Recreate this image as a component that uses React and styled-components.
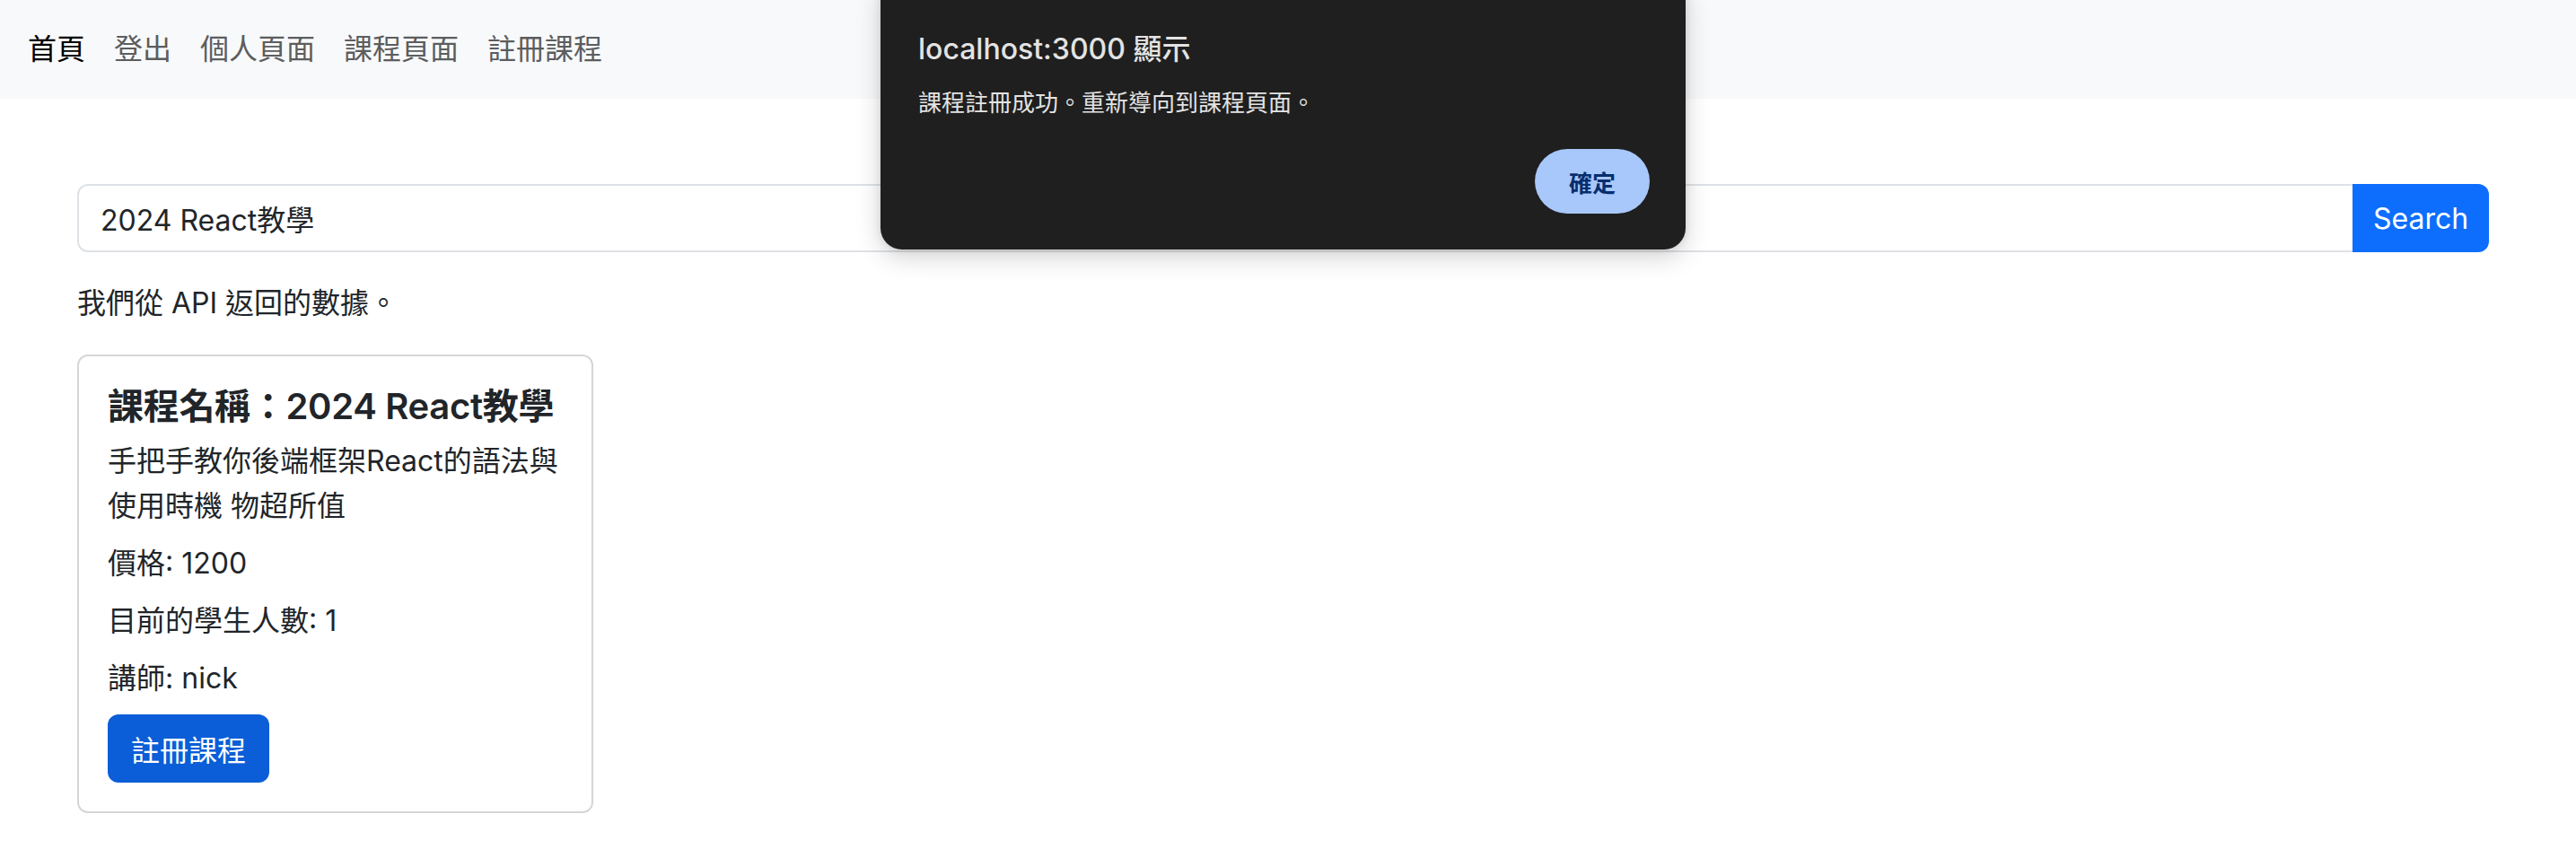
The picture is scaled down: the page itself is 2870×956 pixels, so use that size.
import React from "react";
import styled, { createGlobalStyle } from "styled-components";

const GlobalStyle = createGlobalStyle`
  html, body {
    margin: 0;
    padding: 0;
    background: #ffffff;
  }
  body {
    font-family: Inter, "Noto Sans CJK TC", "Noto Sans", sans-serif;
    color: #212529;
    overflow: hidden;
  }
  * { box-sizing: border-box; }
`;

const Page = styled.div`
  position: relative;
  width: 2870px;
  min-height: 956px;
`;

const Navbar = styled.nav`
  height: 110px;
  background: #f8f9fa;
  display: flex;
  align-items: center;
  padding-left: 15px;
`;

const NavLink = styled.a`
  font-size: 32px;
  line-height: 48px;
  padding: 0 16px;
  color: ${(p) => (p.$active ? "#000000" : "#5c5d5e")};
  text-decoration: none;
  cursor: pointer;
`;

const Main = styled.main`
  padding: 95px 97px 0 86px;
`;

const SearchGroup = styled.div`
  display: flex;
  height: 76px;
  margin-bottom: 32px;
`;

const SearchInput = styled.input`
  flex: 1;
  min-width: 0;
  height: 100%;
  border: 2px solid #dee2e6;
  border-right: none;
  border-radius: 12px 0 0 12px;
  padding: 0 24px;
  font-family: inherit;
  font-size: 32px;
  color: #212529;
  background: #ffffff;
  outline: none;
`;

const SearchButton = styled.button`
  width: 152px;
  height: 100%;
  border: none;
  border-radius: 0 12px 12px 0;
  background: #0d6efd;
  color: #ffffff;
  font-family: inherit;
  font-size: 32px;
  cursor: pointer;
`;

const Lead = styled.p`
  margin: 0 0 32px;
  font-size: 32px;
  line-height: 50px;
`;

const Card = styled.div`
  width: 575px;
  border: 2px solid #d6d6d6;
  border-radius: 12px;
  padding: 32px;
`;

const CardTitle = styled.h5`
  margin: 0 0 12px;
  font-size: 40px;
  line-height: 48px;
  font-weight: 600;
  letter-spacing: -0.3px;
  color: #212529;
`;

const CardText = styled.p`
  margin: 0 0 14px;
  font-size: 32px;
  line-height: 50px;
`;

const PrimaryButton = styled.button`
  display: inline-flex;
  align-items: center;
  justify-content: center;
  height: 76px;
  margin-top: 1px;
  padding: 0 26px;
  border: none;
  border-radius: 12px;
  background: ${(p) => p.$bg || "#0d6efd"};
  color: #ffffff;
  font-family: inherit;
  font-size: 32px;
  cursor: pointer;
`;

const Dialog = styled.div`
  position: absolute;
  top: -24px;
  left: 981px;
  width: 897px;
  height: 302px;
  background: #1f1f1f;
  border-radius: 24px;
  padding: 59px 40px 0 42px;
  box-shadow: 0 8px 28px rgba(0, 0, 0, 0.18), 0 0 8px rgba(0, 0, 0, 0.1);
  display: flex;
  flex-direction: column;
`;

const DialogTitle = styled.div`
  font-size: 32px;
  line-height: 40px;
  font-weight: 500;
  color: #e3e3e3;
  margin-bottom: 23px;
`;

const DialogMessage = styled.div`
  font-size: 26px;
  line-height: 34px;
  color: #e3e3e3;
  margin-bottom: 34px;
`;

const DialogActions = styled.div`
  display: flex;
  justify-content: flex-end;
`;

const DialogButton = styled.button`
  width: 128px;
  height: 72px;
  border: none;
  border-radius: 36px;
  background: #a8c7fa;
  color: #062e6f;
  font-family: inherit;
  font-size: 26px;
  font-weight: 700;
  cursor: pointer;
`;

const navItems = ["首頁", "登出", "個人頁面", "課程頁面", "註冊課程"];

export default function App() {
  return (
    <Page>
      <GlobalStyle />
      <Navbar>
        {navItems.map((item, i) => (
          <NavLink key={item} $active={i === 0}>
            {item}
          </NavLink>
        ))}
      </Navbar>
      <Main>
        <SearchGroup>
          <SearchInput type="text" defaultValue="2024 React教學" />
          <SearchButton>Search</SearchButton>
        </SearchGroup>
        <Lead>我們從 API 返回的數據。</Lead>
        <Card>
          <CardTitle>課程名稱：2024 React教學</CardTitle>
          <CardText>手把手教你後端框架React的語法與使用時機 物超所值</CardText>
          <CardText>價格: 1200</CardText>
          <CardText>目前的學生人數: 1</CardText>
          <CardText>講師: nick</CardText>
          <PrimaryButton $bg="#0b5ed7">註冊課程</PrimaryButton>
        </Card>
      </Main>
      <Dialog role="alertdialog">
        <DialogTitle>localhost:3000 顯示</DialogTitle>
        <DialogMessage>課程註冊成功。重新導向到課程頁面。</DialogMessage>
        <DialogActions>
          <DialogButton>確定</DialogButton>
        </DialogActions>
      </Dialog>
    </Page>
  );
}
